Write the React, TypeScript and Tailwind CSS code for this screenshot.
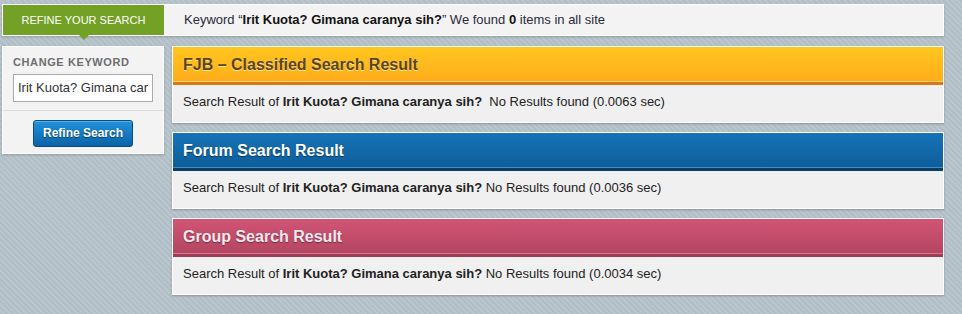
const keyword = "Irit Kuota? Gimana caranya sih?";

type Result = {
  title: string;
  header: string;
  titleClass: string;
  time: string;
  extraSpace?: boolean;
};

const results: Result[] = [
  {
    title: "FJB \u2013 Classified Search Result",
    header:
      "bg-[linear-gradient(#ffc61f,#ffac1b)] border-b-[3px] border-[#d8781a] shadow-[inset_0_-1px_0_#ffd36a]",
    titleClass: "text-[#5a451c] [text-shadow:0_1px_0_#ffe7a0]",
    time: "0.0063",
    extraSpace: true,
  },
  {
    title: "Forum Search Result",
    header:
      "bg-[linear-gradient(#1673b8,#0e5d98)] border-b-[3px] border-[#0b3e66] shadow-[inset_0_-1px_0_#3f8fca]",
    titleClass: "text-white [text-shadow:0_1px_1px_#0a3a60]",
    time: "0.0036",
  },
  {
    title: "Group Search Result",
    header:
      "bg-[linear-gradient(#d25476,#b2455f)] border-b-[3px] border-[#9f3a54] shadow-[inset_0_-1px_0_#d97892]",
    titleClass: "text-[#f8e9ee] [text-shadow:0_1px_1px_#7d2a40]",
    time: "0.0034",
  },
];

function ResultPanel({ result }: { result: Result }) {
  return (
    <section className="border border-white bg-[#f0f0f0] shadow-[0_1px_2px_rgba(0,0,0,0.25)]">
      <div className={`flex h-[38px] items-center px-[10px] ${result.header}`}>
        <h2 className={`text-[16px] font-bold ${result.titleClass}`}>{result.title}</h2>
      </div>
      <div className="flex h-[37px] items-center px-[10px] pb-[3px] text-[13px] text-[#222]">
        <span>
          Search Result of <b>{keyword}</b>
          {result.extraSpace ? "\u00a0 " : " "}
          No Results found ({result.time} sec)
        </span>
      </div>
    </section>
  );
}

export default function App() {
  return (
    <div className="min-h-[314px] bg-[repeating-linear-gradient(45deg,#b2bec6_0px,#b2bec6_2px,#bac6cd_2px,#bac6cd_4px)] pl-[2px] pt-[4px] font-['Liberation_Sans',Arial,sans-serif]">
      <div className="w-[942px]">
        <div className="flex h-[32px] border border-white bg-[#f3f3f3] shadow-[0_1px_2px_rgba(0,0,0,0.2)]">
          <div className="relative flex w-[161px] items-center justify-center bg-[#72a126] text-[11px] uppercase text-white">
            Refine your search
            <span className="absolute left-[76px] top-full h-0 w-0 border-x-[5px] border-t-[5px] border-x-transparent border-t-[#72a126]" />
          </div>
          <div className="flex items-center pl-[20px] text-[13px] text-[#2a2a3a]">
            <span>
              Keyword &ldquo;<b className="text-[#111]">{keyword}</b>&rdquo; We found <b className="text-[#111]">0</b> items in all site
            </span>
          </div>
        </div>

        <div className="mt-[10px] flex gap-[8px]">
          <aside className="h-[108px] w-[162px] shrink-0 border border-white bg-[#f3f3f3] shadow-[0_1px_2px_rgba(0,0,0,0.2)]">
            <div className="px-[10px] pt-[7px]">
              <div className="text-[11px] font-bold uppercase tracking-[0.6px] text-[#6e6e6e]">Change keyword</div>
              <input
                readOnly
                value={keyword}
                className="mt-[3px] h-[28px] w-[140px] border border-[#aaa] bg-white px-[4px] text-[13px] text-[#333] outline-none"
              />
            </div>
            <div className="mt-[8px] border-t border-[#dcdcdc]" />
            <div className="flex justify-center pt-[9px]">
              <button className="h-[27px] w-[100px] rounded-[3px] border border-[#0a4a7e] bg-[linear-gradient(#2292dc,#0b62a6)] text-[12px] font-bold text-white shadow-[inset_0_1px_0_#5ab3ec] [text-shadow:0_1px_1px_#083c66]">
                Refine Search
              </button>
            </div>
          </aside>

          <main className="flex flex-1 flex-col gap-[9px]">
            {results.map((result) => (
              <ResultPanel key={result.title} result={result} />
            ))}
          </main>
        </div>
      </div>
    </div>
  );
}
